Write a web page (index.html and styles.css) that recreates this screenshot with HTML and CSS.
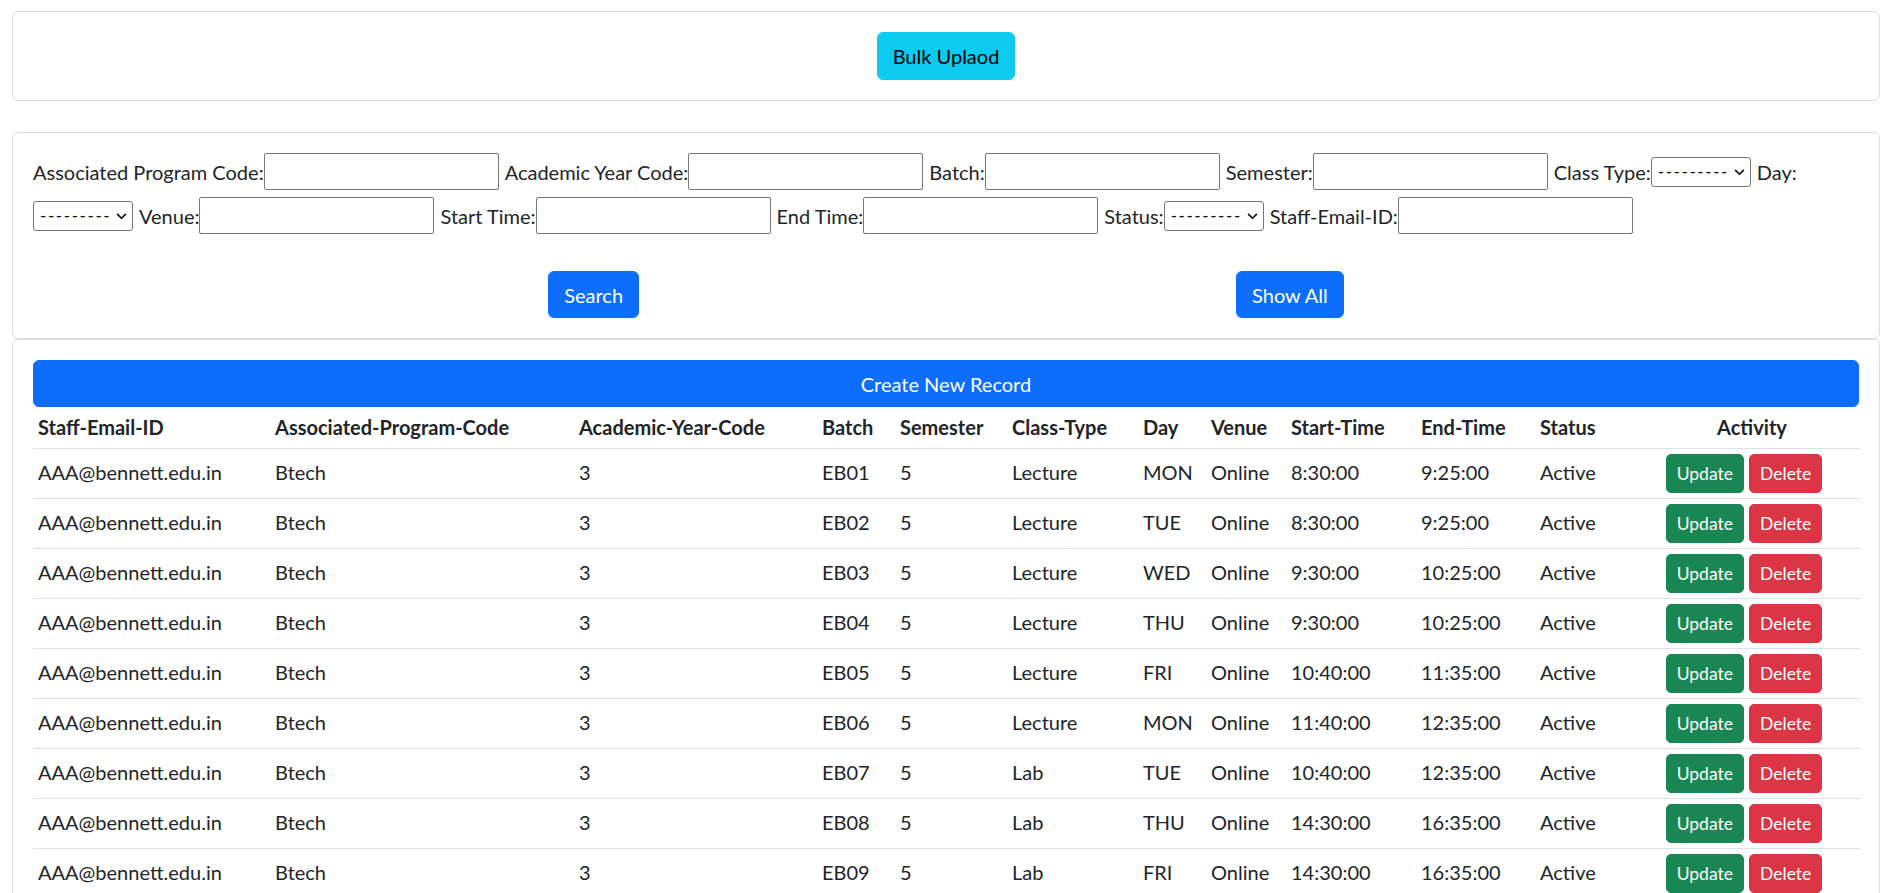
FILE: index.html
```html
<!DOCTYPE html>
<html lang="en">
<head>
<meta charset="utf-8">
<title>Timetable</title>
<link rel="stylesheet" href="styles.css">
</head>
<body>
<div class="card card-upload">
  <button class="btn btn-info">Bulk Uplaod</button>
</div>

<div class="card card-filter">
  <div class="frow">
    <label>Associated Program Code:</label><input class="inp" type="text">
    <label>Academic Year Code:</label><input class="inp" type="text">
    <label>Batch:</label><input class="inp" type="text">
    <label>Semester:</label><input class="inp" type="text">
    <label>Class Type:</label><span class="sel"><span class="sel-text">---------</span><svg class="chev" viewBox="0 0 12 8" width="11" height="7"><path d="M1.5 1.5 L6 6 L10.5 1.5" fill="none" stroke="#111" stroke-width="2" stroke-linecap="round" stroke-linejoin="round"/></svg></span>
    <label>Day:</label>
  </div>
  <div class="frow">
    <span class="sel first"><span class="sel-text">---------</span><svg class="chev" viewBox="0 0 12 8" width="11" height="7"><path d="M1.5 1.5 L6 6 L10.5 1.5" fill="none" stroke="#111" stroke-width="2" stroke-linecap="round" stroke-linejoin="round"/></svg></span>
    <label>Venue:</label><input class="inp" type="text">
    <label>Start Time:</label><input class="inp" type="text">
    <label>End Time:</label><input class="inp" type="text">
    <label>Status:</label><span class="sel"><span class="sel-text">---------</span><svg class="chev" viewBox="0 0 12 8" width="11" height="7"><path d="M1.5 1.5 L6 6 L10.5 1.5" fill="none" stroke="#111" stroke-width="2" stroke-linecap="round" stroke-linejoin="round"/></svg></span>
    <label>Staff-Email-ID:</label><input class="inp" type="text">
  </div>
  <div class="actions">
    <button class="btn btn-primary btn-search">Search</button>
    <button class="btn btn-primary btn-showall">Show All</button>
  </div>
</div>

<div class="card card-table">
  <button class="btn btn-primary btn-create">Create New Record</button>
  <table class="tbl">
    <colgroup>
      <col class="c1"><col class="c2"><col class="c3"><col class="c4"><col class="c5"><col class="c6"><col class="c7"><col class="c8"><col class="c9"><col class="c10"><col class="c11"><col class="c12">
    </colgroup>
    <thead>
      <tr>
        <th>Staff-Email-ID</th><th>Associated-Program-Code</th><th>Academic-Year-Code</th><th>Batch</th><th>Semester</th><th>Class-Type</th><th>Day</th><th>Venue</th><th>Start-Time</th><th>End-Time</th><th>Status</th><th class="act-h">Activity</th>
      </tr>
    </thead>
    <tbody>
      <tr><td>AAA@bennett.edu.in</td><td>Btech</td><td>3</td><td>EB01</td><td>5</td><td>Lecture</td><td>MON</td><td>Online</td><td>8:30:00</td><td>9:25:00</td><td>Active</td><td class="act"><button class="btn btn-sm btn-success">Update</button> <button class="btn btn-sm btn-danger">Delete</button></td></tr>
      <tr><td>AAA@bennett.edu.in</td><td>Btech</td><td>3</td><td>EB02</td><td>5</td><td>Lecture</td><td>TUE</td><td>Online</td><td>8:30:00</td><td>9:25:00</td><td>Active</td><td class="act"><button class="btn btn-sm btn-success">Update</button> <button class="btn btn-sm btn-danger">Delete</button></td></tr>
      <tr><td>AAA@bennett.edu.in</td><td>Btech</td><td>3</td><td>EB03</td><td>5</td><td>Lecture</td><td>WED</td><td>Online</td><td>9:30:00</td><td>10:25:00</td><td>Active</td><td class="act"><button class="btn btn-sm btn-success">Update</button> <button class="btn btn-sm btn-danger">Delete</button></td></tr>
      <tr><td>AAA@bennett.edu.in</td><td>Btech</td><td>3</td><td>EB04</td><td>5</td><td>Lecture</td><td>THU</td><td>Online</td><td>9:30:00</td><td>10:25:00</td><td>Active</td><td class="act"><button class="btn btn-sm btn-success">Update</button> <button class="btn btn-sm btn-danger">Delete</button></td></tr>
      <tr><td>AAA@bennett.edu.in</td><td>Btech</td><td>3</td><td>EB05</td><td>5</td><td>Lecture</td><td>FRI</td><td>Online</td><td>10:40:00</td><td>11:35:00</td><td>Active</td><td class="act"><button class="btn btn-sm btn-success">Update</button> <button class="btn btn-sm btn-danger">Delete</button></td></tr>
      <tr><td>AAA@bennett.edu.in</td><td>Btech</td><td>3</td><td>EB06</td><td>5</td><td>Lecture</td><td>MON</td><td>Online</td><td>11:40:00</td><td>12:35:00</td><td>Active</td><td class="act"><button class="btn btn-sm btn-success">Update</button> <button class="btn btn-sm btn-danger">Delete</button></td></tr>
      <tr><td>AAA@bennett.edu.in</td><td>Btech</td><td>3</td><td>EB07</td><td>5</td><td>Lab</td><td>TUE</td><td>Online</td><td>10:40:00</td><td>12:35:00</td><td>Active</td><td class="act"><button class="btn btn-sm btn-success">Update</button> <button class="btn btn-sm btn-danger">Delete</button></td></tr>
      <tr><td>AAA@bennett.edu.in</td><td>Btech</td><td>3</td><td>EB08</td><td>5</td><td>Lab</td><td>THU</td><td>Online</td><td>14:30:00</td><td>16:35:00</td><td>Active</td><td class="act"><button class="btn btn-sm btn-success">Update</button> <button class="btn btn-sm btn-danger">Delete</button></td></tr>
      <tr><td>AAA@bennett.edu.in</td><td>Btech</td><td>3</td><td>EB09</td><td>5</td><td>Lab</td><td>FRI</td><td>Online</td><td>14:30:00</td><td>16:35:00</td><td>Active</td><td class="act"><button class="btn btn-sm btn-success">Update</button> <button class="btn btn-sm btn-danger">Delete</button></td></tr>
    </tbody>
  </table>
</div>
</body>
</html>
```

FILE: styles.css
```css
* { box-sizing: border-box; }
html, body { margin: 0; }
body {
  padding: 11px 6px 0 12px;
  font-family: Lato, "Noto Sans", sans-serif;
  font-size: 20px;
  line-height: 1.5;
  color: #212529;
  background: #fff;
}
.card {
  border: 1px solid #dcdcdc;
  border-radius: 6px;
  padding: 20px;
  background: #fff;
}
.card-upload {
  text-align: center;
  margin-bottom: 31px;
}
.card-table { padding-top: 20px; }

.btn {
  display: inline-block;
  font-family: inherit;
  font-size: 20px;
  line-height: 30px;
  padding: 8px 15px;
  border: 1px solid transparent;
  border-radius: 6px;
  cursor: pointer;
}
.btn-info { background: #0dcaf0; border-color: #0dcaf0; color: #000; }
.btn-primary { background: #0d6efd; border-color: #0d6efd; color: #fff; }
.btn-success { background: #198754; border-color: #198754; color: #fff; }
.btn-danger { background: #dc3545; border-color: #dc3545; color: #fff; }
.btn-sm {
  font-size: 17.5px;
  line-height: 27px;
  padding: 5px 10px;
  border-radius: 5px;
}

.frow {
  display: flex;
  align-items: center;
  height: 37px;
  margin-bottom: 7px;
  white-space: nowrap;
}
.inp {
  width: 235px;
  height: 37px;
  border: 1px solid #767676;
  border-radius: 2px;
  margin-right: 6px;
  font: inherit;
  padding: 0 4px;
  background: #fff;
}
.sel {
  position: relative;
  display: inline-flex;
  align-items: center;
  width: 100px;
  height: 30px;
  border: 1px solid #767676;
  border-radius: 3px;
  margin-right: 6px;
  padding-left: 6px;
  background: #fff;
}
.sel-text {
  font-size: 17px;
  letter-spacing: 1.6px;
  line-height: 1;
  color: #111;
}
.chev {
  position: absolute;
  right: 5px;
  top: 11px;
}
.actions {
  display: flex;
  justify-content: center;
  gap: 597px;
  margin-top: 37px;
}
.btn-search, .btn-showall { padding-top: 7.5px; padding-bottom: 7.5px; }

.btn-create {
  display: block;
  width: 100%;
  padding: 7.5px 15px;
  text-align: center;
}

.tbl {
  width: 1827px;
  table-layout: fixed;
  border-collapse: collapse;
}
.tbl th, .tbl td {
  padding: 3px 5px 7px;
  text-align: left;
  vertical-align: middle;
  border-bottom: 1px solid #dee2e6;
  white-space: nowrap;
}
.tbl th { font-weight: 700; padding: 5px 5px 6px; }
.tbl .act-h { text-align: center; }
.tbl .act { text-align: center; padding: 5px 21px 5px 5px; }
.c1 { width: 237px; }
.c2 { width: 304px; }
.c3 { width: 243px; }
.c4 { width: 78px; }
.c5 { width: 112px; }
.c6 { width: 131px; }
.c7 { width: 68px; }
.c8 { width: 80px; }
.c9 { width: 130px; }
.c10 { width: 119px; }
.c11 { width: 109px; }
.c12 { width: 216px; }
```
